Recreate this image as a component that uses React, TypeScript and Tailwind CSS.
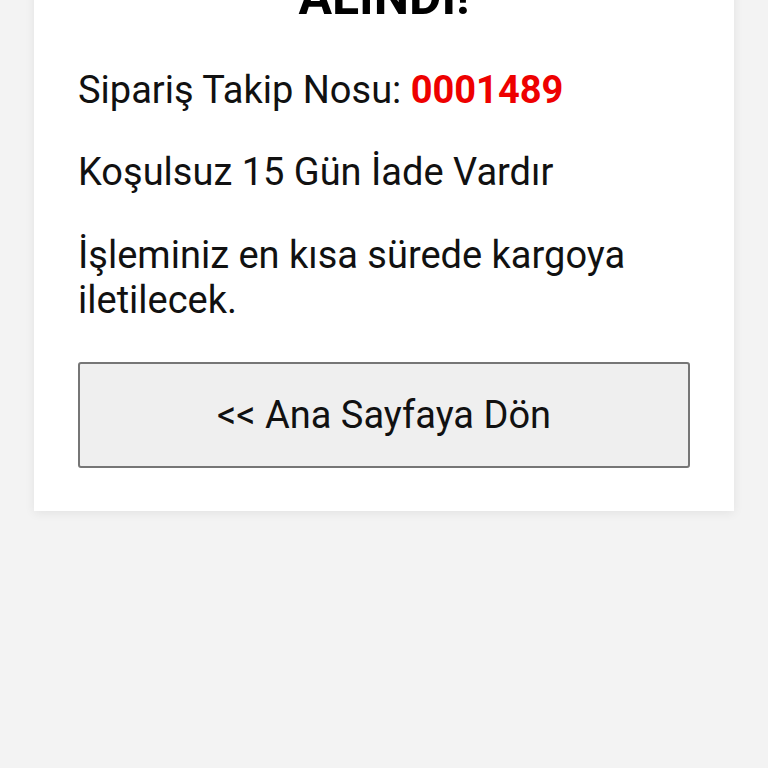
export default function App() {
  return (
    <div
      className="min-h-screen bg-[#f3f3f3] overflow-hidden"
      style={{ fontFamily: 'Roboto, "Noto Sans", sans-serif' }}
    >
      <div className="mx-[34px] -mt-[123px] bg-white pt-[30px] pb-[43px] px-[44px] shadow-[0_2px_10px_rgba(0,0,0,0.07)]">
        <h1 className="text-center text-[50px] leading-[60px] font-bold text-black">
          SİPARİŞİNİZ
          <br />
          ALINDI!
        </h1>
        <div className="text-[38px] leading-[45px] text-[#111]">
          <p className="mt-[41px]">
            Sipariş Takip Nosu: <span className="font-bold text-[#ee0000]">0001489</span>
          </p>
          <p className="mt-[37px]">Koşulsuz 15 Gün İade Vardır</p>
          <p className="mt-[38px]">İşleminiz en kısa sürede kargoya iletilecek.</p>
        </div>
        <button className="mt-[39px] w-full h-[106px] rounded-[3px] border-2 border-[#767676] bg-[#efefef] text-[38px] text-[#111]">
          &lt;&lt; Ana Sayfaya Dön
        </button>
      </div>
    </div>
  );
}
